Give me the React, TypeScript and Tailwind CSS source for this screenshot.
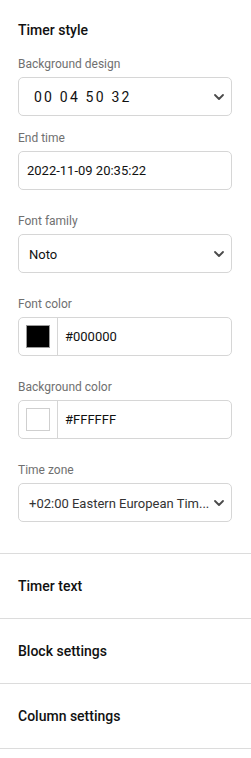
import { ChevronDown } from "lucide-react"

type FieldProps = {
  label: string
  className?: string
  children: React.ReactNode
}

function Field({ label, className, children }: FieldProps) {
  return (
    <div className={className}>
      <div className="mb-[5px] text-[12px] leading-4 text-[#707070]">{label}</div>
      {children}
    </div>
  )
}

function SelectBox({ children }: { children: React.ReactNode }) {
  return (
    <div className="flex h-[39px] items-center justify-between rounded-[5px] border border-[#d6d6d6] bg-white pl-[10px] pr-[4px]">
      <div className="min-w-0 flex-1 whitespace-nowrap">{children}</div>
      <ChevronDown className="h-4 w-4 shrink-0 text-[#4a4a4a]" strokeWidth={2.75} />
    </div>
  )
}

function ColorInput({ color, value, dark }: { color: string; value: string; dark?: boolean }) {
  return (
    <div className="flex h-[39px] items-center rounded-[5px] border border-[#d6d6d6] bg-white">
      <div className="flex h-full w-[39px] items-center justify-center border-r border-[#d6d6d6]">
        <div
          className={`h-[23px] w-[24px] border ${dark ? "border-[#9a9a9a]" : "border-[#cfcfcf]"}`}
          style={{ backgroundColor: color }}
        />
      </div>
      <div className="pl-[7px] text-[13px] text-[#111]">{value}</div>
    </div>
  )
}

const sections = ["Timer text", "Block settings", "Column settings"]

export default function App() {
  return (
    <div className="w-[251px] bg-white font-['Roboto',sans-serif] text-[#111]">
      <div className="pt-5 pr-[19px] pb-[31px] pl-[18px]">
        <h2 className="text-[14px] font-medium leading-5">Timer style</h2>

        <Field label="Background design" className="mt-4">
          <SelectBox>
            <span className="pl-[5px] text-[14px] tracking-[2.2px] text-[#111]">00 04 50 32</span>
          </SelectBox>
        </Field>

        <Field label="End time" className="mt-[14px]">
          <div className="flex h-[39px] items-center rounded-[5px] border border-[#d6d6d6] bg-white pl-[8px] text-[13px]">
            2022-11-09 20:35:22
          </div>
        </Field>

        <Field label="Font family" className="mt-[23px]">
          <SelectBox>
            <span className="text-[13px]">Noto</span>
          </SelectBox>
        </Field>

        <Field label="Font color" className="mt-[23px]">
          <ColorInput color="#000000" value="#000000" dark />
        </Field>

        <Field label="Background color" className="mt-[23px]">
          <ColorInput color="#ffffff" value="#FFFFFF" />
        </Field>

        <Field label="Time zone" className="mt-[23px]">
          <SelectBox>
            <span className="text-[13px] text-[#333]">+02:00 Eastern European Tim...</span>
          </SelectBox>
        </Field>
      </div>

      {sections.map((title) => (
        <div
          key={title}
          className="flex h-[65px] items-center border-t border-[#dcdcdc] px-[18px] text-[14px] font-medium"
        >
          {title}
        </div>
      ))}
      <div className="border-t border-[#dcdcdc]" />
    </div>
  )
}
